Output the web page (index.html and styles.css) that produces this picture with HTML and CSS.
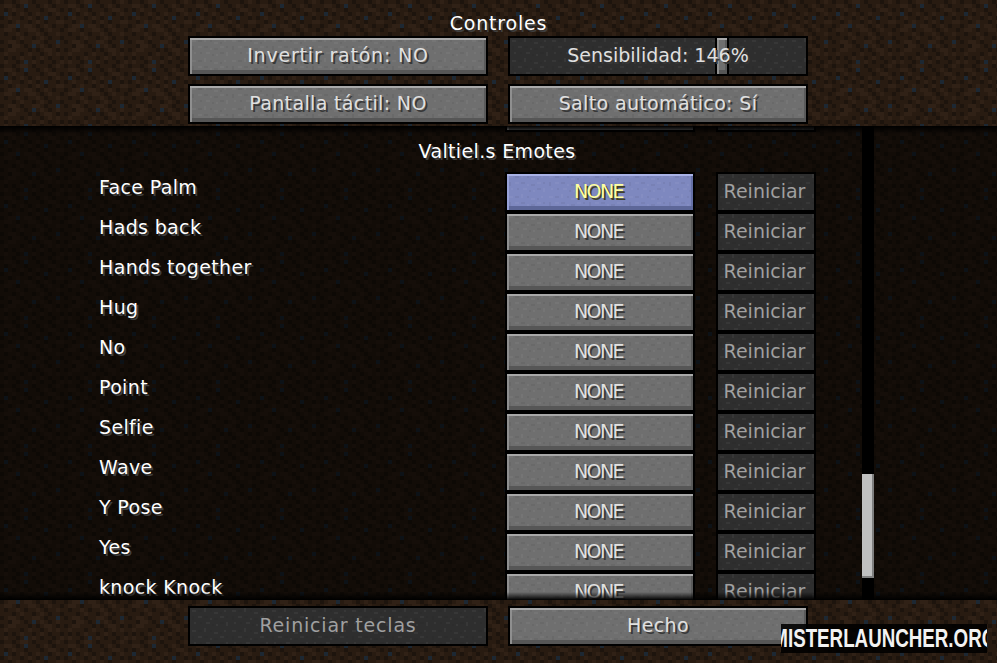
FILE: index.html
```html
<!DOCTYPE html>
<html lang="es">
<head>
    <meta charset="UTF-8">
    <title>Controles</title>
    <link rel="stylesheet" href="styles.css">
</head>
<body>
    <header class="top-bar">
        <h1 class="title">Controles</h1>
        <div class="option-grid">
            <div class="btn btn-wide">Invertir ratón: NO</div>
            <div class="btn btn-slider">
                <span class="slider-thumb"></span>
                <span class="slider-text">Sensibilidad: 146%</span>
            </div>
            <div class="btn">Pantalla táctil: NO</div>
            <div class="btn">Salto automático: Sí</div>
        </div>
    </header>

    <main class="key-list">
        <div class="rows">
            <div class="row">
                <span class="row-label"></span>
                <div class="btn"></div>
                <div class="btn btn-off btn-reset"></div>
            </div>
            <div class="category">Valtiel.s Emotes</div>
            <div class="row">
                <span class="row-label">Face Palm</span>
                <div class="btn btn-key btn-active">NONE</div>
                <div class="btn btn-off btn-reset">Reiniciar</div>
            </div>
            <div class="row">
                <span class="row-label">Hads back</span>
                <div class="btn btn-key">NONE</div>
                <div class="btn btn-off btn-reset">Reiniciar</div>
            </div>
            <div class="row">
                <span class="row-label">Hands together</span>
                <div class="btn btn-key">NONE</div>
                <div class="btn btn-off btn-reset">Reiniciar</div>
            </div>
            <div class="row">
                <span class="row-label">Hug</span>
                <div class="btn btn-key">NONE</div>
                <div class="btn btn-off btn-reset">Reiniciar</div>
            </div>
            <div class="row">
                <span class="row-label">No</span>
                <div class="btn btn-key">NONE</div>
                <div class="btn btn-off btn-reset">Reiniciar</div>
            </div>
            <div class="row">
                <span class="row-label">Point</span>
                <div class="btn btn-key">NONE</div>
                <div class="btn btn-off btn-reset">Reiniciar</div>
            </div>
            <div class="row">
                <span class="row-label">Selfie</span>
                <div class="btn btn-key">NONE</div>
                <div class="btn btn-off btn-reset">Reiniciar</div>
            </div>
            <div class="row">
                <span class="row-label">Wave</span>
                <div class="btn btn-key">NONE</div>
                <div class="btn btn-off btn-reset">Reiniciar</div>
            </div>
            <div class="row">
                <span class="row-label">Y Pose</span>
                <div class="btn btn-key">NONE</div>
                <div class="btn btn-off btn-reset">Reiniciar</div>
            </div>
            <div class="row">
                <span class="row-label">Yes</span>
                <div class="btn btn-key">NONE</div>
                <div class="btn btn-off btn-reset">Reiniciar</div>
            </div>
            <div class="row">
                <span class="row-label">knock Knock</span>
                <div class="btn btn-key">NONE</div>
                <div class="btn btn-off btn-reset">Reiniciar</div>
            </div>
        </div>
        <div class="scroll-track">
            <div class="scroll-thumb"></div>
        </div>
    </main>

    <footer class="bottom-bar">
        <div class="option-grid">
            <div class="btn btn-off btn-wide">Reiniciar teclas</div>
            <div class="btn">Hecho</div>
        </div>
    </footer>

    <div class="watermark"><span class="watermark-text">MISTERLAUNCHER.ORG</span></div>
</body>
</html>
```

FILE: styles.css
```css
* {
    margin: 0;
    padding: 0;
    box-sizing: border-box;
}
html, body {
    height: 100%;
    overflow: hidden;
}
body {
    position: relative;
    display: flex;
    flex-direction: column;
    font-family: "DejaVu Sans", sans-serif;
    font-size: 19px;
    letter-spacing: 0.35px;
    color: #fff;
    background-color: #281b11;
    background-size: 64px 64px;
    background-image: url("data:image/svg+xml,%3Csvg xmlns='http://www.w3.org/2000/svg' viewBox='0 0 16 16' width='64' height='64' shape-rendering='crispEdges'%3E%3Cpath fill='%231d140d' d='M0 0h1v1h-1zM3 0h1v1h-1zM8 0h1v1h-1zM12 0h1v1h-1zM4 1h1v1h-1zM9 1h1v1h-1zM13 1h1v1h-1zM1 2h1v1h-1zM6 2h1v1h-1zM10 2h1v1h-1zM15 2h1v1h-1zM3 3h1v1h-1zM7 3h1v1h-1zM12 3h1v1h-1zM0 4h1v1h-1zM5 4h1v1h-1zM9 4h1v1h-1zM14 4h1v1h-1zM2 5h1v1h-1zM7 5h1v1h-1zM11 5h1v1h-1zM0 6h1v1h-1zM9 6h1v1h-1zM13 6h1v1h-1zM4 7h1v1h-1zM10 7h1v1h-1zM15 7h1v1h-1zM1 8h1v1h-1zM6 8h1v1h-1zM11 8h1v1h-1zM3 9h1v1h-1zM8 9h1v1h-1zM12 9h1v1h-1zM15 9h1v1h-1zM0 10h1v1h-1zM5 10h1v1h-1zM11 10h1v1h-1zM2 11h1v1h-1zM6 11h1v1h-1zM12 11h1v1h-1zM0 12h1v1h-1zM7 12h1v1h-1zM9 12h1v1h-1zM14 12h1v1h-1zM5 13h1v1h-1zM10 13h1v1h-1zM1 14h1v1h-1zM3 14h1v1h-1zM8 14h1v1h-1zM12 14h1v1h-1zM15 14h1v1h-1zM4 15h1v1h-1zM10 15h1v1h-1zM13 15h1v1h-1z'/%3E%3Cpath fill='%23302116' d='M5 0h2v1h-2zM14 0h1v1h-1zM1 1h2v1h-2zM11 1h1v1h-1zM3 2h1v1h-1zM12 2h2v1h-2zM5 3h1v1h-1zM9 3h1v1h-1zM14 3h1v1h-1zM2 4h1v1h-1zM7 4h1v1h-1zM4 5h1v1h-1zM9 5h1v1h-1zM14 5h2v1h-2zM2 6h2v1h-2zM6 6h2v1h-2zM11 6h1v1h-1zM1 7h2v1h-2zM7 7h2v1h-2zM12 7h1v1h-1zM4 8h1v1h-1zM9 8h1v1h-1zM14 8h1v1h-1zM5 9h1v1h-1zM10 9h1v1h-1zM2 10h2v1h-2zM8 10h2v1h-2zM3 11h2v1h-2zM10 11h1v1h-1zM14 11h1v1h-1zM2 12h2v1h-2zM11 12h2v1h-2zM1 13h1v1h-1zM7 13h1v1h-1zM12 13h1v1h-1zM14 13h1v1h-1zM5 14h1v1h-1zM10 14h1v1h-1zM1 15h1v1h-1zM8 15h1v1h-1zM15 15h1v1h-1z'/%3E%3Cpath fill='%231d2833' d='M6 1h1v1h-1zM1 3h1v1h-1zM11 4h1v1h-1zM4 6h1v1h-1zM14 10h1v1h-1zM8 11h1v1h-1zM6 15h1v1h-1z'/%3E%3C/svg%3E");
}

/* bars */
.top-bar {
    height: 126px;
    flex-shrink: 0;
}
.title {
    height: 36px;
    font-size: 19px;
    font-weight: normal;
    letter-spacing: 0.8px;
    line-height: 46px;
    text-align: center;
    text-shadow: 2px 2px 0 #3f3f3f;
}
.option-grid {
    width: 620px;
    margin-left: 188px;
    display: grid;
    grid-template-columns: 300px 300px;
    gap: 8px 20px;
}
.bottom-bar {
    height: 63px;
    flex-shrink: 0;
    padding-top: 6px;
}

/* buttons */
.btn {
    height: 40px;
    padding-bottom: 2px;
    border: 2px solid #000;
    background-color: #6f6f6f;
    background-image: url("data:image/svg+xml,%3Csvg xmlns='http://www.w3.org/2000/svg' viewBox='0 0 20 10' width='40' height='20' shape-rendering='crispEdges'%3E%3Cpath fill='%23fff' fill-opacity='.045' d='M1 1h2v1h-2zM7 0h1v2h-1zM12 2h2v1h-2zM17 1h1v1h-1zM4 4h2v1h-2zM10 5h1v1h-1zM15 4h2v1h-2zM2 7h1v1h-1zM8 7h2v1h-2zM13 8h1v1h-1zM18 7h1v2h-1z'/%3E%3Cpath fill='%23000' fill-opacity='.05' d='M4 1h2v1h-2zM10 1h1v1h-1zM15 2h1v1h-1zM1 4h1v2h-1zM7 4h2v1h-2zM12 5h2v1h-2zM18 4h1v1h-1zM5 7h1v1h-1zM11 8h1v1h-1zM15 7h2v1h-2z'/%3E%3C/svg%3E");
    box-shadow: inset 0 2px 0 #a9a9a9, inset 2px 0 0 #8f8f8f, inset 0 -4px 0 #565656, inset -2px 0 0 #5a5a5a;
    display: flex;
    align-items: center;
    justify-content: center;
    color: #e0e0e0;
    text-shadow: 2px 2px 0 #383838;
    white-space: nowrap;
}
.btn-wide {
    letter-spacing: 0.8px;
}
.btn-key {
    letter-spacing: -1.6px;
    padding-right: 3px;
}
.btn-off {
    background-color: #2e2e2e;
    box-shadow: none;
    color: #a0a0a0;
    text-shadow: none;
}
.btn-reset {
    width: 100px;
    margin-left: 21px;
    padding-right: 3px;
    letter-spacing: 0;
}
.btn-active {
    background-color: #7e88bf;
    box-shadow: inset 0 2px 0 #a9b2e6, inset 2px 0 0 #98a2d8, inset 0 -4px 0 #5d6798, inset -2px 0 0 #6670a6;
    color: #ffffa0;
    text-shadow: 2px 2px 0 #3f3f28;
}
.btn-slider {
    position: relative;
    background-color: #2e2e2e;
    box-shadow: none;
    letter-spacing: 0;
}
.slider-thumb {
    position: absolute;
    left: 205px;
    top: 0;
    width: 14px;
    height: 36px;
    border-left: 2px solid #000;
    border-right: 2px solid #000;
    background-color: #6f6f6f;
    box-shadow: inset 0 2px 0 #a9a9a9, inset 2px 0 0 #8f8f8f, inset 0 -4px 0 #565656, inset -2px 0 0 #5a5a5a;
}
.slider-text {
    position: relative;
}

/* list */
.key-list {
    position: relative;
    flex: 1;
    overflow: hidden;
    background-color: rgba(0, 0, 0, 0.55);
}
.key-list::before,
.key-list::after {
    content: "";
    position: absolute;
    left: 0;
    right: 0;
    height: 8px;
    z-index: 2;
}
.key-list::before {
    top: 0;
    background: linear-gradient(#000, rgba(0, 0, 0, 0));
}
.key-list::after {
    bottom: 0;
    background: linear-gradient(rgba(0, 0, 0, 0), #000);
}
.rows {
    margin-top: -34px;
}
.category {
    height: 40px;
    line-height: 38px;
    text-align: center;
    padding-right: 3px;
    text-shadow: 2px 2px 0 #3f3f3f;
}
.row {
    height: 40px;
    padding-left: 99px;
    display: grid;
    grid-template-columns: 406px 190px 121px;
}
.row-label {
    padding-top: 5px;
    line-height: 20px;
    text-shadow: 2px 2px 0 #3f3f3f;
}

/* scrollbar */
.scroll-track {
    position: absolute;
    left: 862px;
    top: 0;
    bottom: 0;
    width: 12px;
    background-color: #000;
    padding-top: 348px;
}
.scroll-thumb {
    height: 104px;
    background-color: #808080;
    background-image: linear-gradient(#c0c0c0, #c0c0c0);
    background-size: 10px 102px;
    background-repeat: no-repeat;
}

/* watermark */
.watermark {
    position: absolute;
    left: 781px;
    top: 624px;
    width: 206px;
    height: 29px;
    background-color: rgba(0, 0, 0, 0.88);
    display: flex;
    align-items: center;
    justify-content: center;
    overflow: hidden;
}
.watermark-text {
    flex-shrink: 0;
    font-family: "Liberation Sans Narrow", "Liberation Sans", sans-serif;
    font-weight: bold;
    font-size: 25px;
    letter-spacing: 0;
    color: #f2f2f2;
    transform: scaleX(0.75);
}
```
